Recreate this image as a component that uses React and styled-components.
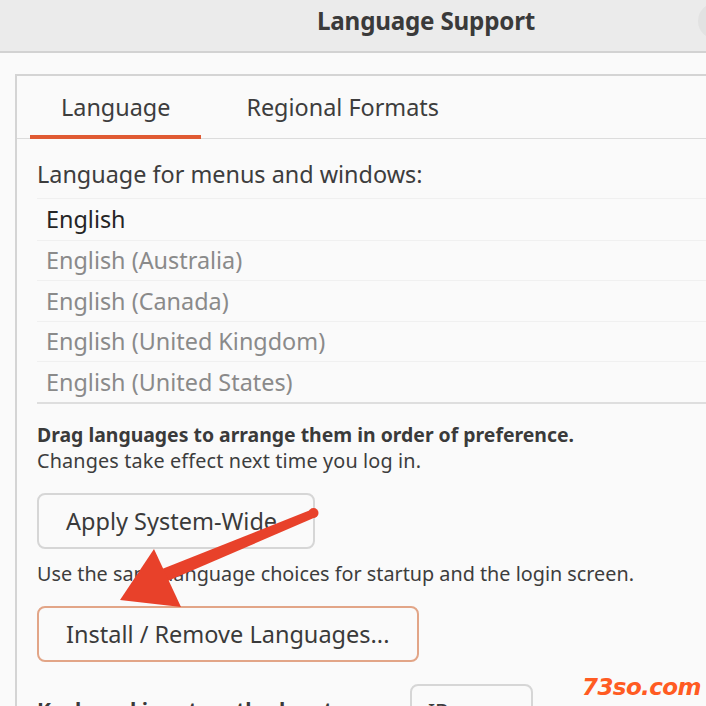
import React from "react";
import styled, { createGlobalStyle } from "styled-components";

const Global = createGlobalStyle`
  html, body { margin: 0; padding: 0; background: #fafafa; overflow: hidden; }
  body { font-family: "Noto Sans", "Open Sans", sans-serif; color: #3d3d3d; }
  #root { width: 706px; height: 706px; overflow: hidden; position: relative; }
`;

const TitleBar = styled.header`
  height: 53px;
  box-sizing: border-box;
  background: #ebebeb;
  border-bottom: 2px solid #d2d2d2;
  display: flex;
  align-items: flex-start;
  padding-left: 317px;
`;

const Title = styled.h1`
  margin: 4px 0 0 0;
  font-size: 24.2px;
  line-height: 34px;
  font-weight: 700;
  color: #3a3a3a;
  letter-spacing: -0.2px;
`;

const CircleButton = styled.div`
  margin-left: auto;
  margin-right: -28px;
  width: 36px;
  height: 36px;
  border-radius: 50%;
  background: #e2e2e2;
  margin-top: 3px;
`;

const Body = styled.main`
  padding: 21px 0 0 15px;
`;

const Notebook = styled.section`
  border-left: 2px solid #d4d4d4;
  border-top: 2px solid #d4d4d4;
  background: #fafafa;
  height: 700px;
`;

const TabBar = styled.nav`
  display: flex;
  height: 62px;
  border-bottom: 1px solid #dcdcdc;
  padding-left: 13px;
  gap: 14px;
`;

const Tab = styled.div`
  display: flex;
  align-items: center;
  padding: 2px 31px 0;
  font-size: 23.4px;
  color: #3d3d3d;
  border-bottom: 4px solid ${(p) => (p.$active ? "#e05a33" : "transparent")};
  margin-bottom: -1px;
`;

const Content = styled.div`
  padding: 21px 0 0 20px;
  display: flex;
  flex-direction: column;
`;

const Label = styled.div`
  font-size: 23.4px;
  color: #3d3d3d;
  line-height: 28px;
`;

const List = styled.ul`
  list-style: none;
  margin: 10px 0 0 0;
  padding: 0;
  border-top: 1px solid #f0f0f0;
  border-bottom: 2px solid #dedede;
  margin-right: -20px;
`;

const Row = styled.li`
  height: 40.5px;
  box-sizing: border-box;
  display: flex;
  align-items: center;
  padding-left: 9px;
  font-size: 23.4px;
  color: ${(p) => (p.$current ? "#252525" : "#8a8a8a")};
  border-top: ${(p) => (p.$first ? "none" : "1px solid #f0f0f0")};
`;

const Bold = styled.div`
  margin-top: 18px;
  font-size: 19.4px;
  font-weight: 700;
  color: #3a3a3a;
  line-height: 26px;
`;

const Note = styled.div`
  font-size: 19.8px;
  color: #3d3d3d;
  line-height: 26px;
  letter-spacing: ${(p) => p.$ls || "0px"};
  margin-top: ${(p) => p.$mt || "0px"};
`;

const Button = styled.button`
  align-self: flex-start;
  box-sizing: border-box;
  height: 56px;
  width: ${(p) => p.$w};
  margin-top: ${(p) => p.$mt};
  border-radius: 8px;
  border: 2px solid ${(p) => (p.$focus ? "#e2a587" : "#d6d6d6")};
  background: #fafafa;
  font-family: inherit;
  font-size: 23.5px;
  color: #3a3a3a;
  text-align: left;
  padding: 0 0 0 27px;
`;

const KeyboardRow = styled.div`
  display: grid;
  grid-template-columns: 373px 123px;
  align-items: start;
  margin-top: 22px;
`;

const KeyboardLabel = styled.div`
  font-size: 21px;
  font-weight: 700;
  color: #3a3a3a;
  margin-top: 12px;
  white-space: nowrap;
`;

const Dropdown = styled.div`
  height: 48px;
  box-sizing: border-box;
  border: 2px solid #d6d6d6;
  border-radius: 8px;
  padding: 12px 16px 0;
  font-size: 21px;
`;

const Arrow = styled.svg`
  position: absolute;
  left: 0;
  top: 0;
  pointer-events: none;
`;

const Watermark = styled.div`
  position: absolute;
  left: 582px;
  top: 674px;
  font-family: "DejaVu Sans", sans-serif;
  font-weight: 700;
  font-style: italic;
  font-size: 23px;
  color: #ff5b22;
  letter-spacing: -0.6px;
`;

const langs = [
  "English",
  "English (Australia)",
  "English (Canada)",
  "English (United Kingdom)",
  "English (United States)",
];

export default function App() {
  return (
    <>
      <Global />
      <TitleBar>
        <Title>Language Support</Title>
        <CircleButton />
      </TitleBar>
      <Body>
        <Notebook>
          <TabBar>
            <Tab $active>Language</Tab>
            <Tab>Regional Formats</Tab>
          </TabBar>
          <Content>
            <Label>Language for menus and windows:</Label>
            <List>
              {langs.map((l, i) => (
                <Row key={l} $first={i === 0} $current={i === 0}>
                  {l}
                </Row>
              ))}
            </List>
            <Bold>Drag languages to arrange them in order of preference.</Bold>
            <Note $ls="0.15px">Changes take effect next time you log in.</Note>
            <Button $w="278px" $mt="19px">Apply System-Wide</Button>
            <Note $mt="12px">Use the same language choices for startup and the login screen.</Note>
            <Button $w="382px" $mt="19px" $focus>Install / Remove Languages...</Button>
            <KeyboardRow>
              <KeyboardLabel>Keyboard input method system:</KeyboardLabel>
              <Dropdown>IBus</Dropdown>
            </KeyboardRow>
          </Content>
        </Notebook>
      </Body>
      <Arrow width="706" height="706" viewBox="0 0 706 706">
        <path d="M313 509 L316 517 L163 583 L157 571 Z" fill="#e8412a" />
        <circle cx="313.5" cy="513" r="5" fill="#e8412a" />
        <polygon points="120,600 154,549 181,607" fill="#e8412a" />
      </Arrow>
      <Watermark>73so.com</Watermark>
    </>
  );
}
